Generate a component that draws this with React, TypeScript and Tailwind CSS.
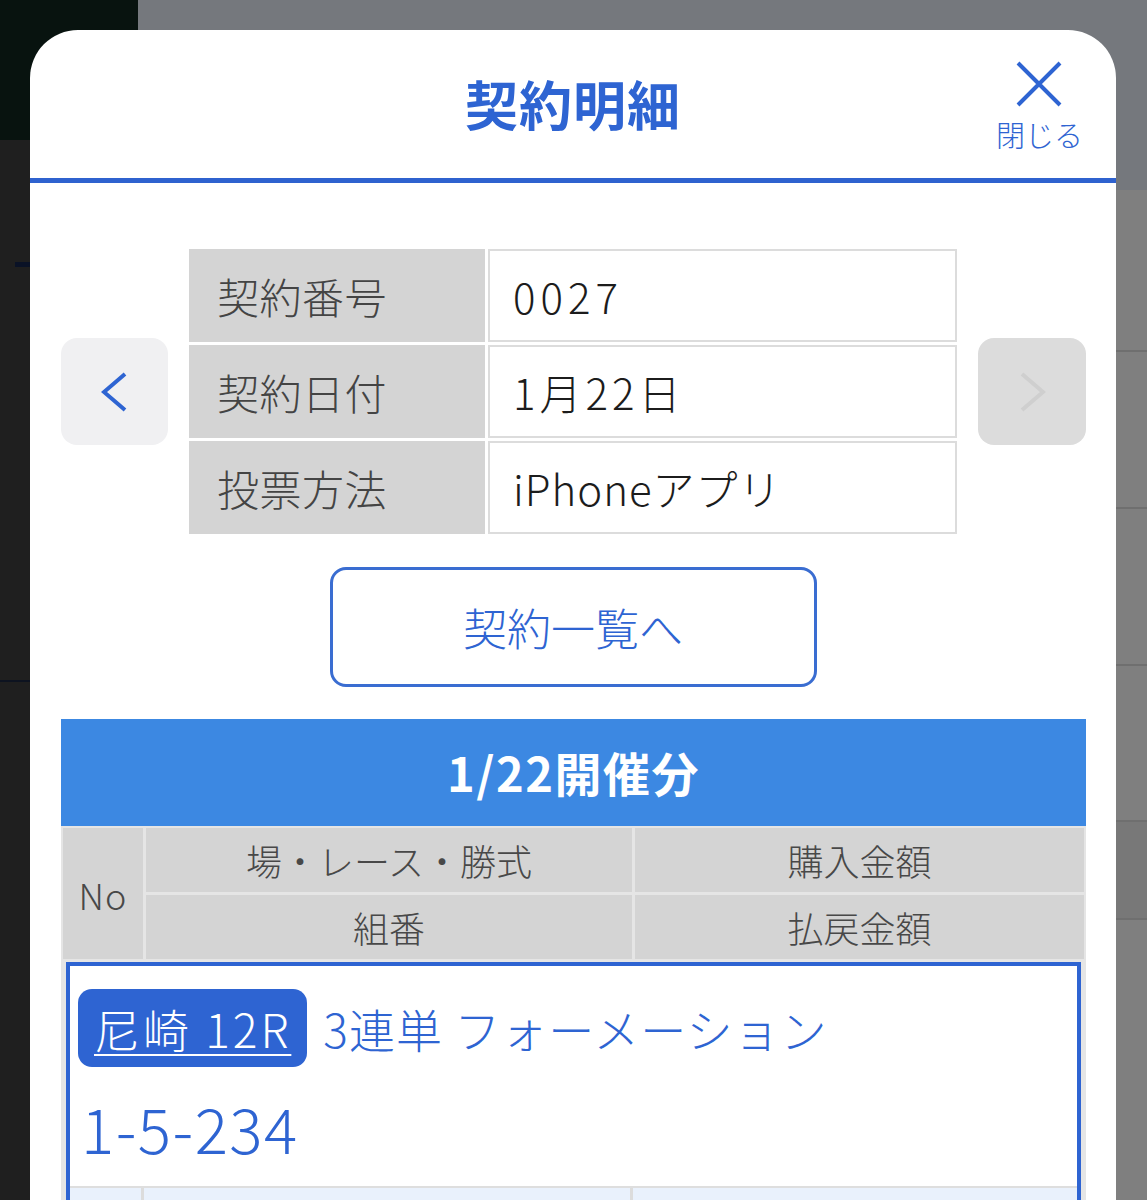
import React from 'react';

const BLUE = 'text-[#2e64d2]';

function Chevron({ dir, color }: { dir: 'left' | 'right'; color: string }) {
  const pts = dir === 'left' ? '24,2 3,20 24,38' : '3,2 24,20 3,38';
  return (
    <svg width="27" height="40" viewBox="0 0 27 40" fill="none">
      <polyline points={pts} stroke={color} strokeWidth="4" strokeLinecap="butt" strokeLinejoin="miter" />
    </svg>
  );
}

function InfoRow({ label, value, spacing }: { label: string; value: string; spacing: string }) {
  return (
    <div className="grid grid-cols-[296px_1fr] gap-[3px] h-[93px]">
      <div className="bg-[#d4d4d4] flex items-center pl-[28px] text-[42px] text-[#444] tracking-[0.5px]">{label}</div>
      <div className={`bg-white border-2 border-[#dcdcdc] flex items-center pl-[23px] text-[42px] text-[#1c1c1c] ${spacing}`}>
        {value}
      </div>
    </div>
  );
}

export default function App() {
  return (
    <div className="relative h-[1200px] w-full overflow-hidden bg-[#7f7f7f] font-['Noto_Sans_CJK_JP',sans-serif] font-light">
      {/* dimmed page behind the sheet */}
      <div className="flex h-full">
        <div className="w-[138px] flex flex-col">
          <div className="h-[140px] bg-[#08130f]" />
          <div className="flex-1 bg-[#1f1f1f] flex flex-col">
            <div className="mt-[122px] ml-[15px] w-[20px] h-[5px] bg-[#0a1226]" />
            <div className="mt-[413px] h-[2px] bg-[#0d1320]" />
          </div>
        </div>
        <div className="flex-1 flex flex-col">
          <div className="h-[190px] bg-[#75787d]" />
          <div className="h-[162px] border-b-2 border-[#6f6f6f]" />
          <div className="h-[157px] border-b-2 border-[#6f6f6f]" />
          <div className="h-[157px] border-b-2 border-[#6f6f6f]" />
          <div className="h-[156px] border-b-2 border-[#6f6f6f]" />
          <div className="h-[96px] bg-[#787878]" />
          <div className="h-[157px] border-t-2 border-[#6f6f6f]" />
        </div>
      </div>

      {/* modal sheet */}
      <div className="absolute left-[30px] top-[30px] w-[1086px] h-[1200px] bg-white rounded-t-[48px]">
        <div className="relative h-[148px] flex items-center justify-center">
          <h1 className={`text-[53px] font-bold ${BLUE} tracking-[1px]`}>契約明細</h1>
          <button className="absolute right-[33px] top-[30px] flex flex-col items-center">
            <svg width="48" height="48" viewBox="0 0 48 48" fill="none">
              <path d="M3 3 L45 45 M45 3 L3 45" stroke="#2e64d2" strokeWidth="4" />
            </svg>
            <span className={`text-[29px] leading-none mt-[12px] ${BLUE}`}>閉じる</span>
          </button>
        </div>
        <div className="h-[5px] bg-[#2f62cf]" />

        <div className="flex items-center px-[31px] gap-[21px] mt-[66px] pr-[30px]">
          <button className="w-[107px] h-[107px] rounded-[16px] bg-[#f0f0f2] flex items-center justify-center">
            <Chevron dir="left" color="#2e64d2" />
          </button>
          <div className="flex-1 flex flex-col gap-[3px]">
            <InfoRow label="契約番号" value="0027" spacing="tracking-[5px]" />
            <InfoRow label="契約日付" value="1月22日" spacing="tracking-[4px]" />
            <InfoRow label="投票方法" value="iPhoneアプリ" spacing="tracking-[1px]" />
          </div>
          <button className="w-[108px] h-[107px] rounded-[16px] bg-[#dcdcdc] flex items-center justify-center">
            <Chevron dir="right" color="#cfcfcf" />
          </button>
        </div>

        <div className="flex justify-center mt-[33px]">
          <button className={`w-[487px] h-[120px] border-[3px] border-[#3a6dd1] rounded-[16px] text-[44px] ${BLUE}`}>
            契約一覧へ
          </button>
        </div>

        <div className="mx-[31px] mr-[30px] mt-[32px]">
          <div className="h-[107px] bg-[#3c88e2] flex items-center justify-center text-white text-[47px] font-bold tracking-[1.5px]">
            1/22開催分
          </div>
          <div className="bg-[#e5e5e5] p-[2px]">
            <div className="grid grid-cols-[80px_486px_1fr] grid-rows-[64px_64px] gap-[3px] text-[36px] text-[#484848]">
              <div className="row-span-2 bg-[#d4d4d4] flex items-center justify-center tracking-[1px]">No</div>
              <div className="bg-[#d4d4d4] flex items-center justify-center">場・レース・勝式</div>
              <div className="bg-[#d4d4d4] flex items-center justify-center">購入金額</div>
              <div className="bg-[#d4d4d4] flex items-center justify-center">組番</div>
              <div className="bg-[#d4d4d4] flex items-center justify-center">払戻金額</div>
            </div>
            <div className="mx-[3px] mt-[3px] border-4 border-[#2e64d2] bg-white">
              <div className="px-[8px] pt-[23px]">
                <div className="flex items-center gap-[16px]">
                  <span className="h-[78px] px-[16px] rounded-[14px] bg-[#2e64d2] text-white text-[46px] flex items-center underline underline-offset-[6px] decoration-2 tracking-[3px]">
                    尼崎 12R
                  </span>
                  <span className={`text-[46px] ${BLUE} tracking-[1px]`}>3連単 フォーメーション</span>
                </div>
                <div className={`text-[62px] leading-none pl-[3px] pt-[29px] pb-[28px] tracking-[1.5px] ${BLUE}`}>1-5-234</div>
              </div>
              <div className="border-t-2 border-[#dedede] grid grid-cols-[71px_486px_1fr] gap-[3px] bg-[#dcdcdc] h-[80px]">
                <div className="bg-[#e9f1fc]" />
                <div className="bg-[#e9f1fc]" />
                <div className="bg-[#e9f1fc]" />
              </div>
            </div>
          </div>
        </div>
      </div>
    </div>
  );
}
